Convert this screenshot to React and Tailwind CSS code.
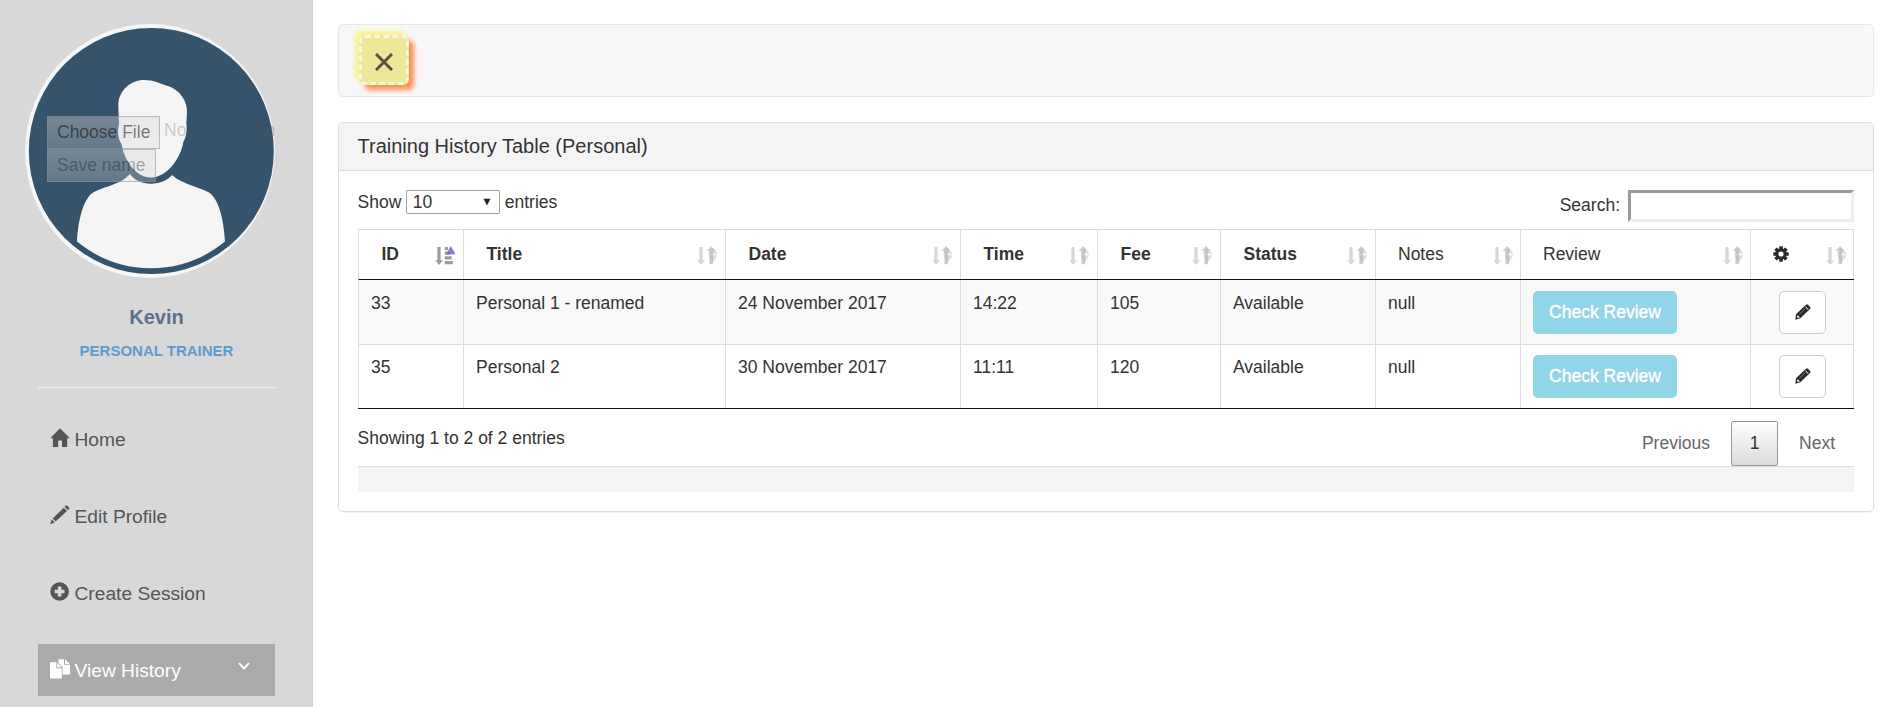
const HomeIcon = () => (
  <svg className="h-5 w-5 shrink-0" viewBox="0 0 20 20" fill="currentColor">
    <path d="M10 0.2 L20 10.2 H17.2 V19 H12 V12.5 H8.2 V19 H2.9 V10.2 H0.2 Z" />
  </svg>
);

const PencilIcon = () => (
  <svg className="h-5 w-5 shrink-0" viewBox="0 0 20 20" fill="currentColor">
    <path d="M15.8 0.6 Q16.6 0 17.3 0.7 L19 2.4 Q19.6 3.2 19 3.9 L17.8 5.1 L14.6 1.8 Z M13.7 2.7 L17 6 L5.6 16.6 L2.7 13.6 Z M1.8 14.6 L4.8 17.5 L0 19.3 Z" />
  </svg>
);

const PlusIcon = () => (
  <svg className="h-5 w-5 shrink-0" viewBox="0 0 20 20" fill="currentColor">
    <path
      fillRule="evenodd"
      d="M9.6 0.2 A9.3 9.3 0 1 1 9.6 18.8 A9.3 9.3 0 1 1 9.6 0.2 Z M7.8 4.6 V7.7 H4.7 V11.3 H7.8 V14.4 H11.4 V11.3 H14.5 V7.7 H11.4 V4.6 Z"
    />
  </svg>
);

const CopyIcon = () => (
  <svg className="h-5 w-5 shrink-0" viewBox="0 0 20 20" fill="currentColor">
    <path d="M8.4 0.2 H14 V5.8 H20 V15.6 H12.6 V8.2 L8.4 3.6 Z M15 0.2 L20 4.9 H15 Z M0 3.2 H6.4 V9.2 H11.8 V19.4 H0 Z M7.3 3.4 L11.6 8.3 H7.3 Z" />
  </svg>
);

const EditIcon = () => (
  <svg className="h-4 w-4" viewBox="0 0 16 16">
    <path
      fill="#2b2b2b"
      fillRule="evenodd"
      d="M11 .8 Q12 -.2 13 .8 L15.1 3 Q16 4 15 5 L5.3 14.3 L.3 15.7 L1 10.3 Z M2.2 11.7 L2 13 L3.2 14.1 L4.6 13.6 L4.5 12.5 L3.5 12.4 L3.3 11.500 Z M10.2 2.9 L13 5.900 L13.500 5.400 L10.700 2.500 Z"
    />
    <path d="M4.2 10.4 L10.4 4.700" stroke="#999" strokeWidth=".6" />
  </svg>
);

const GearIcon = () => (
  <svg className="h-4 w-4" viewBox="-8 -8 16 16">
    <g fill="#2b2b2b">
      {[0, 45, 90, 135].map((a) => (
        <rect key={a} x="-1.8" y="-7.7" width="3.6" height="15.4" rx=".5" transform={`rotate(${a})`} />
      ))}
      <circle r="5.7" />
    </g>
    <circle r="2.6" fill="#fff" />
  </svg>
);

const SortIcon = ({ active }) => (
  <svg className="h-5 w-5 overflow-visible" viewBox="0 0 20 20">
    {active ? (
      <g fill="#9c9c9c">
        <path d="M2.4 1 H5.6 V14.2 H8 L4.1 19 L.2 14.2 H2.4 Z" />
        <path d="M9.8 1 H13 V4 H9.8 Z M9.8 5.6 H15.2 V8.8 H9.8 Z M9.8 10.3 H16.7 V13.4 H9.8 Z M9.8 14.9 H17.8 V18.2 H9.8 Z" />
        <path d="M15.8 0 L20.6 8.300 H11 Z" fill="#6a6ad0" fillOpacity=".85" />
      </g>
    ) : (
      <g>
        <path fill="#d6d6d6" d="M2.4 1 H5.6 V14.2 H8 L4.1 19 L.2 14.2 H2.4 Z" />
        <path fill="#cdcdcd" d="M14.2 0 L18.3 4.9 H16 V18.3 H12.4 V4.9 H9.5 Z" />
        <path fill="#b8b8b8" fillOpacity=".5" d="M15.6 1.5 L20.6 7.8 H11 Z M11.5 9.3 H20.6 L15.6 16.500 Z" />
      </g>
    )}
  </svg>
);

const Avatar = () => (
  <svg className="h-[256px] w-[252px]" viewBox="24 23 252 256">
    <ellipse cx="150" cy="151" rx="124.8" ry="127" fill="#f5f6f8" />
    <ellipse cx="151.3" cy="151" rx="122.5" ry="123" fill="#35536b" />
    <path
      fill="#f5f5f5"
      d="M118.3 105 C118.8 90 131 80 144 80 C154 80 159 83.500 168 86 C180 90 187.300 101 187 112 L186.300 124 C187.500 129 186 138 183.300 142 C181 158 167 177.500 151 177.500 C135 177.500 124 159 121.500 144 C117.500 138 117.500 130 119 124.500 Z"
    />
    <path
      fill="#f5f5f5"
      d="M130 174 C134 180 142 183.700 151 183.700 C160 183.700 168 180 172 175 C183 185 199 186.500 209 192.500 C220 200 224 223 225 241.500 C205 258 180 268.300 151 268.300 C122 268.300 97 258 77 241.500 C78 223 82 203 91 194 C101 186.500 119 186 130 174 Z"
    />
  </svg>
);

const menu = [
  { label: "Home", icon: <HomeIcon /> },
  { label: "Edit Profile", icon: <PencilIcon /> },
  { label: "Create Session", icon: <PlusIcon /> },
  { label: "View History", icon: <CopyIcon />, active: true },
];

const columns = [
  { label: "ID", bold: true, active: true },
  { label: "Title", bold: true },
  { label: "Date", bold: true },
  { label: "Time", bold: true },
  { label: "Fee", bold: true },
  { label: "Status", bold: true },
  { label: "Notes" },
  { label: "Review" },
  { label: <GearIcon /> },
];

const rows = [
  ["33", "Personal 1 - renamed", "24 November 2017", "14:22", "105", "Available", "null"],
  ["35", "Personal 2", "30 November 2017", "11:11", "120", "Available", "null"],
];

const grid =
  "grid grid-cols-[105px_262px_235px_137px_123px_155px_145px_230px_103px] border-l border-[#ddd]";

function Sidebar() {
  return (
    <aside className="h-[707px] w-[313px] shrink-0 overflow-hidden bg-[#d8d8d8] pt-[23px]">
      <div className="relative ml-6 h-[256px]">
        <Avatar />
        <div className="absolute left-[23px] top-[93px] leading-[31px]">
          <div className="flex h-[32px] items-start whitespace-nowrap">
            <div className="h-[33px] w-[113px] shrink-0 border border-[#7b8b99]/50 bg-linear-to-b from-[#d7d7d7]/40 to-[#d7d7d7]/28 pl-[9px] text-black/50">
              Choose File
            </div>
            <span className="-mt-px ml-1 text-[#555]/30">No file chosen</span>
          </div>
          <div className="mt-px h-[33px] w-[109px] border border-[#7b8b99]/50 bg-linear-to-b from-[#d7d7d7]/40 to-[#d7d7d7]/28 pl-[9px] text-black/32">
            Save name
          </div>
        </div>
      </div>
      <div className="mt-[26px] text-center text-[20px] font-bold leading-[24px] text-[#5c708e]">Kevin</div>
      <div className="mt-[12px] text-center text-[15px] font-bold leading-[20px] text-[#5b9bd1]">
        PERSONAL TRAINER
      </div>
      <div className="mx-[38px] mt-[26px] h-px bg-[#f3f3f3]" />
      <nav className="ml-[38px] mt-[25px] flex w-[237px] flex-col gap-[25px]">
        {menu.map((m) => (
          <div
            key={m.label}
            className={
              m.active
                ? "flex h-[52px] items-center bg-[#aaa] pl-[11.5px] text-[19.2px] text-white"
                : "flex h-[52px] items-center pl-[11.5px] text-[19.2px] text-[#555]"
            }
          >
            <span className="-mt-0.5">{m.icon}</span>
            <span className="ml-[5px]">{m.label}</span>
            {m.active && (
              <svg className="-mt-2 ml-auto mr-[25px] h-3 w-3" viewBox="0 0 12 12" fill="none" stroke="#fff" strokeWidth="1.9">
                <path d="M1 3.200 L6 8.500 L11 3.200" />
              </svg>
            )}
          </div>
        ))}
      </nav>
    </aside>
  );
}

export default function App() {
  return (
    <div className="flex h-[707px] overflow-hidden bg-white font-['Liberation_Sans',Arial,sans-serif] text-[17.5px] leading-[25px] text-[#333]">
      <Sidebar />
      <main className="ml-[25px] mt-6 w-[1536px]">
        <div className="h-[73px] rounded-[5px] border border-[#e7e7e7] bg-[#f8f8f8] pl-[19.5px] pt-[10px]">
          <div className="flex h-[50px] w-[50px] items-center justify-center rounded-[6px] border-[3px] border-dashed border-[#f9f6e4] bg-[#ece799] pt-[3px] shadow-[5px_5px_5px_#ff8f4e,-4px_-4px_5px_#f6f58a]">
            <svg className="h-[18px] w-[18px]" viewBox="0 0 18 18" stroke="#55534a" strokeWidth="3">
              <path d="M1 1 L17 17 M17 1 L1 17" />
            </svg>
          </div>
        </div>

        <section className="mt-[25px] h-[390px] overflow-hidden rounded-[5px] border border-[#ddd] shadow-[0_1px_1px_rgba(0,0,0,0.05)]">
          <h3 className="h-[48px] border-b border-[#ddd] bg-[#f4f4f4] pl-[18.5px] text-[20px] leading-[47px]">
            Training History Table (Personal)
          </h3>
          <div className="ml-[19px] mt-[19px] w-[1496px]">
            <div className="flex h-[39px] items-start justify-between">
              <div className="flex items-start">
                <span className="-ml-[0.5px]">Show</span>
                <div className="ml-[4.5px] flex h-[24px] w-[94px] items-center justify-between rounded-[1px] border border-[#a3a3a3] pl-[6px] pr-[8px]">
                  <span>10</span>
                  <svg className="h-2 w-2" viewBox="0 0 8 8" fill="#222">
                    <path d="M.5 .8 H7.500 L4 7.600 Z" />
                  </svg>
                </div>
                <span className="ml-[5px]">entries</span>
              </div>
              <div className="flex items-start">
                <span className="mt-[3px]">Search:</span>
                <div className="ml-[8px] h-[32px] w-[226px] border-[3px] border-b-[#eee] border-l-[#999] border-r-[#eee] border-t-[#999]" />
              </div>
            </div>

            <div className="w-[1496px] border-b border-[#111]">
              <div className={`${grid} h-[51px] border-b border-t border-b-[#111] border-t-[#ddd]`}>
                {columns.map((c, i) => (
                  <div
                    key={i}
                    className={
                      c.bold
                        ? "flex justify-between border-r border-[#ddd] pl-[22.5px] pr-[8px] pt-[12px] font-bold"
                        : "flex justify-between border-r border-[#ddd] pl-[22px] pr-[7.5px] pt-[12px]"
                    }
                  >
                    <div className={i === 8 ? "pt-[4px]" : ""}>{c.label}</div>
                    <div className="pt-[4px]">
                      <SortIcon active={c.active} />
                    </div>
                  </div>
                ))}
              </div>
              {rows.map((r, i) => (
                <div
                  key={i}
                  className={i === 0 ? `${grid} h-[64px] bg-[#f9f9f9]` : `${grid} h-[64px] border-t`}
                >
                  {r.map((t, j) => (
                    <div
                      key={j}
                      className={
                        i === 0
                          ? "whitespace-nowrap border-r border-[#ddd] pl-[12px] pt-[11px]"
                          : "whitespace-nowrap border-r border-[#ddd] pl-[12px] pt-[10px]"
                      }
                    >
                      {t}
                    </div>
                  ))}
                  <div className={i === 0 ? "border-r border-[#ddd] pl-[12px] pt-[11px]" : "border-r border-[#ddd] pl-[12px] pt-[10px]"}>
                    <button className="block h-[43px] w-[144px] rounded-[5px] bg-[#92d4e8] text-white [-webkit-text-stroke:0.4px_white]">
                      Check Review
                    </button>
                  </div>
                  <div className={i === 0 ? "border-r border-[#ddd] pl-[28px] pt-[11px]" : "border-r border-[#ddd] pl-[28px] pt-[10px]"}>
                    <button className="flex h-[43px] w-[47px] items-center justify-center rounded-[5px] border border-[#ccc] bg-white pb-[2px]">
                      <EditIcon />
                    </button>
                  </div>
                </div>
              ))}
            </div>

            <div className="flex h-[57px] justify-between">
              <div className="-ml-[0.5px] pt-[17px]">Showing 1 to 2 of 2 entries</div>
              <div className="flex items-center pt-[12px] text-[#666]">
                <span>Previous</span>
                <div className="ml-[21px] h-[45px] w-[47px] rounded-[2px] border border-[#979797] bg-linear-to-b from-white to-[#dcdcdc] text-center leading-[43px] text-[#333]">
                  1
                </div>
                <span className="ml-[21px] mr-[19px]">Next</span>
              </div>
            </div>
            <div className="h-[26px] border-t border-[#ddd] bg-[#f4f4f4]" />
          </div>
        </section>
      </main>
    </div>
  );
}
